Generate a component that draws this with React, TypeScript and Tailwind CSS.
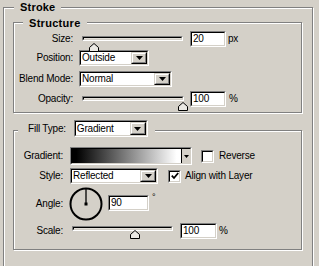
import React from "react";

type SProps = { className?: string; innerClassName?: string; children?: React.ReactNode };

function Sunken({ className = "", innerClassName = "", children }: SProps) {
  return (
    <div className={`border border-[#808080] border-r-white border-b-white ${className}`}>
      <div className={`h-full w-full border border-black border-r-[#d4d0c8] border-b-[#d4d0c8] ${innerClassName}`}>
        {children}
      </div>
    </div>
  );
}

function Arrow({ w = 7, h = 4 }: { w?: number; h?: number }) {
  return (
    <svg width={w} height={h} viewBox={`0 0 ${w} ${h}`}>
      <polygon points={`0,0 ${w},0 ${w / 2},${h}`} fill="#000" />
    </svg>
  );
}

function DropBtn() {
  return (
    <div className="h-full w-[16px] border border-[#d4d0c8] border-r-black border-b-black">
      <div className="h-full w-full border border-white border-r-[#808080] border-b-[#808080] bg-[#d4d0c8] flex items-center justify-center">
        <Arrow />
      </div>
    </div>
  );
}

function Dropdown({ w, label, h = "h-[16px]" }: { w: string; label: string; h?: string }) {
  return (
    <Sunken className={`${w} ${h} shrink-0`} innerClassName="bg-white flex items-stretch">
      <span className="flex-1 pl-[1px] text-[10px] leading-[12px] self-center whitespace-nowrap overflow-hidden">{label}</span>
      <DropBtn />
    </Sunken>
  );
}

function TextBox({ w, value }: { w: string; value: string }) {
  return (
    <Sunken className={`${w} h-[16px] shrink-0`} innerClassName="bg-white pl-[1px] text-[10px] leading-[12px]">
      {value}
    </Sunken>
  );
}

function Thumb({ className }: { className: string }) {
  return (
    <svg className={`absolute ${className}`} width="10" height="9" viewBox="0 0 10 9">
      <polygon points="0.5,4.5 5,0.5 9.5,4.5 9.5,8.5 0.5,8.5" fill="#ebe9e4" stroke="#000" strokeWidth="1" />
    </svg>
  );
}

function Slider({ w, track, thumb }: { w: string; track: string; thumb: string }) {
  return (
    <div className={`relative ${w} h-[16px] shrink-0`}>
      <Sunken className={`${track} h-[5px]`} innerClassName="bg-[#e4e1da]" />
      <Thumb className={thumb} />
    </div>
  );
}

function Checkbox({ checked }: { checked?: boolean }) {
  return (
    <Sunken className="w-[13px] h-[13px] shrink-0" innerClassName="bg-white flex items-center justify-center">
      {checked && (
        <svg width="8" height="8" viewBox="0 0 8 8">
          <polyline points="0.8,3.6 3,6 7.2,1" fill="none" stroke="#000" strokeWidth="1.8" />
        </svg>
      )}
    </Sunken>
  );
}

function Group({ className, children }: { className: string; children: React.ReactNode }) {
  return (
    <div
      className={`relative border border-[#808080] shadow-[inset_1px_1px_0_#fff,1px_1px_0_#fff] ${className}`}
    >
      {children}
    </div>
  );
}

export default function App() {
  return (
    <div className="w-[319px] h-[266px] overflow-hidden bg-[#d4d0c8] pl-[3px] pt-[7px] text-black font-['Liberation_Sans',Arial,sans-serif] text-[10px] leading-[12px] tracking-[-0.2px]">
      <Group className="w-[310px] h-[280px] pl-[9px] pt-[14px]">
        <div className="absolute top-[-7px] left-[10px] px-[6px] bg-[#d4d0c8] font-bold text-[11px] leading-[13px] tracking-[0.2px]">
          Stroke
        </div>

        {/* Structure */}
        <Group className="w-[289px] h-[91px]">
          <div className="absolute top-[-6px] left-[9px] px-[6px] bg-[#d4d0c8] font-bold text-[11px] leading-[13px] tracking-[0.3px]">
            Structure
          </div>

          <div className="mt-[8px] flex items-start h-[16px]">
            <div className="w-[59px] text-right self-center">Size:</div>
            <div className="ml-[9px]">
              <Slider w="w-[101px]" track="mt-[5px]" thumb="top-[7px] left-[7px]" />
            </div>
            <div className="ml-[7px]">
              <TextBox w="w-[36px]" value="20" />
            </div>
            <div className="ml-[2px] self-center">px</div>
          </div>

          <div className="mt-[3px] flex items-center h-[16px]">
            <div className="w-[59px] text-right">Position:</div>
            <div className="ml-[6px]">
              <Dropdown w="w-[70px]" label="Outside" />
            </div>
          </div>

          <div className="mt-[5px] flex items-center h-[16px]">
            <div className="w-[59px] text-right">Blend Mode:</div>
            <div className="ml-[6px]">
              <Dropdown w="w-[93px]" label="Normal" />
            </div>
          </div>

          <div className="mt-[4px] flex items-start h-[16px]">
            <div className="w-[59px] text-right self-center">Opacity:</div>
            <div className="ml-[9px]">
              <Slider w="w-[102px]" track="mt-[5px]" thumb="top-[6px] left-[96px]" />
            </div>
            <div className="ml-[6px]">
              <TextBox w="w-[36px]" value="100" />
            </div>
            <div className="ml-[3px] self-center">%</div>
          </div>
        </Group>

        {/* Fill */}
        <Group className="mt-[17px] w-[289px] h-[120px]">
          <div className="absolute top-[-11px] left-[4px] pl-[10px] pr-[7px] bg-[#d4d0c8] flex items-center h-[17px]">
            <span>Fill Type:</span>
            <div className="ml-[8px]">
              <Dropdown w="w-[74px]" h="h-[17px]" label="Gradient" />
            </div>
          </div>

          <div className="mt-[16px] flex items-center h-[18px]">
            <div className="w-[49px] text-right">Gradient:</div>
            <Sunken className="ml-[7px] w-[122px] h-[18px] shrink-0" innerClassName="flex">
              <div className="flex-1 bg-[linear-gradient(to_right,#000_4%,#fff_96%)]" />
              <div className="w-[9px] border-l border-black bg-[#d4d0c8] flex items-center justify-center">
                <Arrow w={5} h={3} />
              </div>
            </Sunken>
            <div className="ml-[9px]">
              <Checkbox />
            </div>
            <div className="ml-[5px]">Reverse</div>
          </div>

          <div className="mt-[3px] flex items-center h-[16px]">
            <div className="w-[49px] text-right">Style:</div>
            <div className="ml-[7px]">
              <Dropdown w="w-[88px]" label="Reflected" />
            </div>
            <div className="ml-[10px]">
              <Checkbox checked />
            </div>
            <div className="ml-[4px]">Align with Layer</div>
          </div>

          <div className="mt-[3px] flex items-center h-[34px]">
            <div className="w-[49px] text-right">Angle:</div>
            <svg className="ml-[6px] shrink-0" width="34" height="34" viewBox="0 0 34 34">
              <circle cx="17" cy="17" r="15.5" fill="none" stroke="#000" strokeWidth="2" />
              <line x1="17" y1="2" x2="17" y2="17" stroke="#000" strokeWidth="1.3" />
              <rect x="15.5" y="15.5" width="3" height="3" fill="#000" />
            </svg>
            <div className="ml-[5px] -mt-[3px]">
              <TextBox w="w-[41px]" value="90" />
            </div>
            <div className="ml-[3px] self-start mt-[4px] text-[9px]">°</div>
          </div>

          <div className="mt-[2px] flex items-start h-[16px]">
            <div className="w-[49px] text-right self-center">Scale:</div>
            <div className="ml-[9px]">
              <Slider w="w-[101px]" track="mt-[3px]" thumb="top-[4px] left-[58px]" />
            </div>
            <div className="ml-[7px]">
              <TextBox w="w-[37px]" value="100" />
            </div>
            <div className="ml-[2px] self-center">%</div>
          </div>
        </Group>
      </Group>
    </div>
  );
}
